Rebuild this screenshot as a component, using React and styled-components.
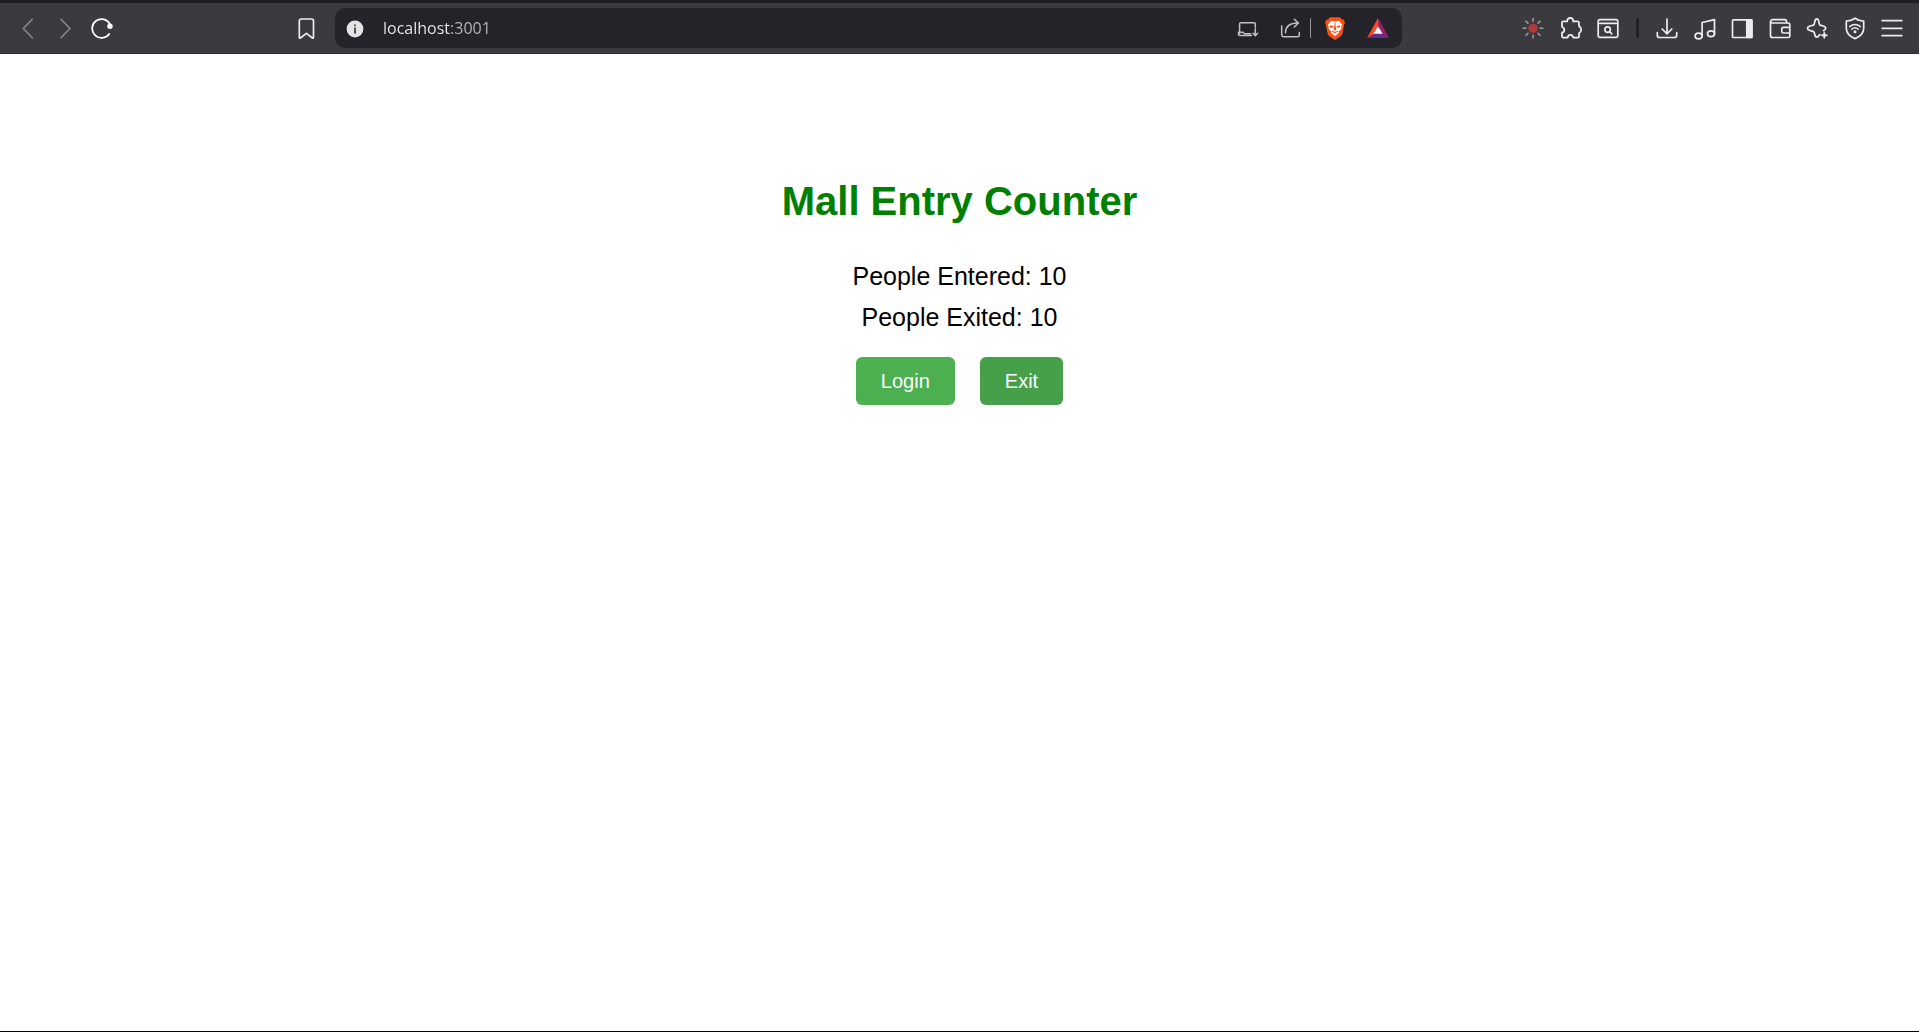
import React, { useState } from "react";
import styled, { createGlobalStyle } from "styled-components";

const GlobalStyle = createGlobalStyle`
  * { box-sizing: border-box; }
  body { margin: 0; background: #fff; font-family: Arial, "Liberation Sans", sans-serif; }
`;

const Window = styled.div`
  display: flex;
  flex-direction: column;
  min-height: 100vh;
  border-bottom: 1px solid #000;
`;

const Toolbar = styled.header`
  display: flex;
  align-items: center;
  height: 54px;
  padding: 0 15px;
  background: #3b3a3f;
  border-top: 3px solid #1f1e24;
  border-bottom: 1px solid #2c2b30;
`;

const Group = styled.div`
  display: flex;
  flex: none;
  align-items: center;
  justify-content: space-between;
  width: ${(p) => p.$width}px;
`;

const IconButton = styled.button`
  display: flex;
  flex: none;
  width: 24px;
  height: 24px;
  padding: 0;
  border: 0;
  background: none;
  color: ${(p) => p.$color || "#ececee"};
  cursor: pointer;
`;

const BookmarkSlot = styled.div`
  margin: 0 16px 0 180px;
`;

const AddressBar = styled.form`
  display: flex;
  flex: 1;
  align-items: center;
  min-width: 0;
  height: 40px;
  margin-right: 119px;
  padding: 0 12px 0 8px;
  border-radius: 10px;
  background: #242329;
`;

const AddressInput = styled.input`
  flex: 1;
  min-width: 0;
  height: 32px;
  margin-left: 16px;
  padding: 0;
  border: 0;
  outline: 0;
  color: #f0f0f3;
  background: linear-gradient(90deg, #f0f0f3 67px, #b8b8be 67px);
  background-clip: text;
  -webkit-text-fill-color: transparent;
  font: 16px/32px "Segoe UI", "Open Sans", sans-serif;
`;

const Divider = styled.span`
  flex: none;
  width: ${(p) => p.$width}px;
  height: 20px;
  margin: ${(p) => p.$margin};
  border-radius: 1px;
  background: ${(p) => p.$color};
`;

const AddressActions = styled.div`
  display: flex;
  align-items: center;
  gap: ${(p) => p.$gap}px;
`;

const Page = styled.main`
  display: flex;
  flex: 1;
  flex-direction: column;
  align-items: center;
  padding-top: 124px;
`;

const Title = styled.h1`
  margin: 0 0 38px;
  color: green;
  font-size: 40px;
  line-height: 46px;
`;

const Count = styled.p`
  margin: 0 0 12px;
  color: #000;
  font-size: 25px;
  line-height: 29px;
`;

const Actions = styled.div`
  display: flex;
  gap: 25px;
  margin-top: 13px;
`;

const ActionButton = styled.button`
  height: 48px;
  padding: 0 25px;
  border: 0;
  border-radius: 6px;
  color: #fff;
  background: ${(p) => (p.$active ? "#45a049" : "#4caf50")};
  font: 20px/24px Arial, "Liberation Sans", sans-serif;
  cursor: pointer;
`;

const Svg = ({ children, w = 1.7 }) => (
  <svg width="24" height="24" viewBox="0 0 24 24" fill="none" stroke="currentColor" strokeWidth={w} strokeLinecap="round" strokeLinejoin="round" aria-hidden="true">
    {children}
  </svg>
);

const icons = {
  back: <Svg w={1.5}><path d="M17.3 3.3 8.3 12.5l9 9.2" /></Svg>,
  forward: <Svg w={1.5}><path d="m8 3.3 9 9.2-9 9.2" /></Svg>,
  reload: <Svg w={1.8}><path d="M18.2 18A9.4 9.4 0 1 1 19 8.3" /><circle cx="19" cy="10.3" r="2.7" fill="currentColor" stroke="none" /></Svg>,
  bookmark: <Svg><path d="M4.3 21.6V5a2 2 0 0 1 2-2h10.2a2 2 0 0 1 2 2v16.6c0 .7-.6.8-1.1.4l-6-4.7-6 4.7c-.5.4-1.1.3-1.1-.4Z" /></Svg>,
  info: <Svg><circle cx="12" cy="13" r="8.4" fill="#e4e4e8" stroke="none" /><path d="M12 12v5M12 9v.4" stroke="#3b3a3f" /></Svg>,
  install: <Svg w={1.5}><path d="M3.6 17.500V8a1.300 1.300 0 0 1 1.300-1.300H18A1.300 1.300 0 0 1 19.300 8v3M15.500 19.500H3.800a1.300 1.300 0 0 1-1.300-1.300v-1.900h4.300c.8 0 1 1.500 2.200 1.500h5.500M19.300 12.500v7M17 17.300l2.300 2.400 2.300-2.400" /></Svg>,
  share: <Svg w={1.5}><path d="M3.7 10v8.5a2.3 2.3 0 0 0 2.3 2.3h13.3a2 2 0 0 0 2-2v-2.3M7.5 16.7c.2-6.3 4-9.6 12.5-9.6M16.3 3.2 20.4 7l-4.1 4" /></Svg>,
  brave: (
    <Svg>
      <g stroke="none">
        <path d="m7 1.200h10l2 2.300 1.900.3 1 3-.7 2-1.800 8.600c-.3 1.300-1 2.200-2.100 3L12 24l-5.300-3.600c-1.100-.8-1.800-1.700-2.100-3L2.800 8.800l-.7-2 1-3L5 3.500Z" fill="#fb5012" />
        <path d="m8.200 4.800 3.800.7 3.800-.7 3.400 4-1 2.300.1 1.800-2.800 2.700.6 1.200-4.100 3.100-4.100-3.100.6-1.200-2.800-2.700.1-1.800-1-2.300Z" fill="#fff" />
        <path d="m6.300 9.300 4.300 1-.7 1.400-2.500-.3ZM17.700 9.300l-4.300 1 .7 1.400 2.500-.3ZM11.500 6.500h1l.1 3.500.8 3.600L12 14.700l-1.400-1.100.8-3.600ZM8.700 14.400l3.300 1.700 3.300-1.700-.5 1.400L12 17.300l-2.800-1.500Z" fill="#fb5012" />
      </g>
    </Svg>
  ),
  bat: (
    <Svg>
      <g stroke="none">
        <path d="M12 2 1 22l7.7-4.3L12 10.5Z" fill="#ff4724" />
        <path d="m12 2 11 20-7.4-4.3L12 10.5Z" fill="#9e1f63" />
        <path d="M1 22h22l-7-4.3H8.5Z" fill="#662d91" />
        <path d="m12 10.3 4.6 7.5H7.4Z" fill="#fff" />
      </g>
    </Svg>
  ),
  sun: (
    <Svg w={1.5}>
      <circle cx="12" cy="12.3" r="4.6" fill="#b23a3a" stroke="none" />
      <path d="M12 2.5v2.8M12 19.3v2.8M2.2 12.3H5M19 12.3h2.8M5.1 5.4 7 7.3M17 17.3l1.9 1.9M5.1 19.2 7 17.3M17 7.3l1.9-1.9" />
    </Svg>
  ),
  puzzle: <Svg w={1.8}><path d="M4.3 5.3h4C7.9 3.3 9.3 2 11.2 2s3.3 1.3 2.9 3.3h4.3a1.6 1.6 0 0 1 1.6 1.6v3.2c1.1.5 2.1 1.9 2.1 3.6s-1 3.1-2.1 3.6v3.1a1.2 1.2 0 0 1-1.2 1.2h-4.6c-.3-1.7-1.4-2.7-2.8-2.7s-2.5 1-2.8 2.7H4.300A1.300 1.300 0 0 1 3 20.300v-3.600c1.500-.4 2.300-1.500 2.300-2.800S4.500 11.400 3 11V6.600a1.300 1.300 0 0 1 1.300-1.300Z" /></Svg>,
  search: <Svg><rect x="2.2" y="3.7" width="19.6" height="17.6" rx="1.5" /><path d="M2.5 7.3h19M13.800 15.800l2 2" /><circle cx="11.6" cy="13.6" r="2.8" /></Svg>,
  download: <Svg><path d="M12 3v14.500M7.200 13l4.800 4.800 4.800-4.800M2.300 16.700v2.500A2.300 2.300 0 0 0 4.600 21.500h14.800a2.300 2.300 0 0 0 2.300-2.300v-2.500" /></Svg>,
  music: <Svg><ellipse cx="5.6" cy="20" rx="3.5" ry="2.9" /><ellipse cx="18" cy="17.7" rx="3.5" ry="2.9" /><path d="M9.100 20V6.500L21.500 3.700v14" /></Svg>,
  sidebar: <Svg><rect x="2.5" y="3.9" width="19.4" height="17.6" rx="1" /><path d="M16.800 4h5v17.500h-5Z" fill="currentColor" /></Svg>,
  wallet: <Svg><path d="M2.500 5.500v14a2 2 0 0 0 2 2h15.700a1.600 1.600 0 0 0 1.600-1.600V8.600A1.600 1.600 0 0 0 20.200 7H4a1.700 1.700 0 0 1 0-3.300h12.800A1.700 1.700 0 0 1 18.500 5.400V7M21.800 11.300h-6.500a1.500 1.500 0 0 0-1.500 1.500v2.700a1.500 1.500 0 0 0 1.500 1.500h6.500" /></Svg>,
  sparkle: <Svg><path d="M15 18.500c-1 .3-1.200 2.600-3.200 2.600-2.700 0-1.600-3.900-3-5.300s-6.300-.6-6.300-3.500 4.900-2.100 6.300-3.500.3-5.900 3-5.900 1.600 4.500 3 5.900 5.900.6 5.900 3.500c0 1.300-1 1.800-2.200 2.200" /><path d="m19.300 15.800 1 2.500 2.500 1-2.500 1-1 2.500-1-2.500-2.500-1 2.500-1Z" fill="currentColor" strokeWidth=".6" /></Svg>,
  vpn: <Svg><path d="M12 2.200c2.500 1.900 5.200 2.800 8.700 3v7c0 5.300-3.700 8.300-8.700 10.400-5-2.100-8.700-5.100-8.700-10.400v-7c3.500-.2 6.200-1.100 8.700-3Z" /><path d="M6.700 10.600c3.100-2.700 7.500-2.700 10.600 0M8.700 13.200c2-1.700 4.600-1.700 6.600 0" strokeWidth="1.5" /><circle cx="12" cy="15.7" r="1.5" fill="currentColor" stroke="none" /></Svg>,
  menu: <Svg><path d="M2.200 4.700h19.600M2.200 12.300h19.600M2.200 19.700h19.600" /></Svg>,
};

const Tool = ({ icon, label, color }) => (
  <IconButton type="button" aria-label={label} $color={color}>{icons[icon]}</IconButton>
);

const BrowserBar = () => (
  <Toolbar>
    <Group as="nav" $width={100}>
      <Tool icon="back" label="Back" color="#8b8a8f" />
      <Tool icon="forward" label="Forward" color="#8b8a8f" />
      <Tool icon="reload" label="Reload" color="#fff" />
    </Group>
    <BookmarkSlot><Tool icon="bookmark" label="Bookmark" /></BookmarkSlot>
    <AddressBar onSubmit={(e) => e.preventDefault()}>
      <Tool icon="info" label="Site information" />
      <AddressInput type="text" aria-label="Address" defaultValue="localhost:3001" spellCheck={false} />
      <AddressActions $gap={18}>
        <Tool icon="install" label="Install" color="#c0c0c5" />
        <Tool icon="share" label="Share" color="#c0c0c5" />
      </AddressActions>
      <Divider $width={1} $margin="0 12px 0 8px" $color="#99989d" />
      <AddressActions $gap={19}>
        <Tool icon="brave" label="Shields" />
        <Tool icon="bat" label="Rewards" />
      </AddressActions>
    </AddressBar>
    <Group $width={99}>
      <Tool icon="sun" label="Brightness" color="#a09fa3" />
      <Tool icon="puzzle" label="Extensions" />
      <Tool icon="search" label="Search tabs" />
    </Group>
    <Divider $width={3} $margin="0 16px" $color="#232228" />
    <Group $width={249}>
      <Tool icon="download" label="Downloads" />
      <Tool icon="music" label="Playlist" />
      <Tool icon="sidebar" label="Sidebar" />
      <Tool icon="wallet" label="Wallet" />
      <Tool icon="sparkle" label="Assistant" />
      <Tool icon="vpn" label="VPN" />
      <Tool icon="menu" label="Menu" />
    </Group>
  </Toolbar>
);

export default function App() {
  const [entered, setEntered] = useState(10);
  const [exited, setExited] = useState(10);
  return (
    <Window>
      <GlobalStyle />
      <BrowserBar />
      <Page>
        <Title>Mall Entry Counter</Title>
        <Count>People Entered: {entered}</Count>
        <Count>People Exited: {exited}</Count>
        <Actions>
          <ActionButton type="button" onClick={() => setEntered(entered + 1)}>Login</ActionButton>
          <ActionButton type="button" $active onClick={() => setExited(exited + 1)}>Exit</ActionButton>
        </Actions>
      </Page>
    </Window>
  );
}
